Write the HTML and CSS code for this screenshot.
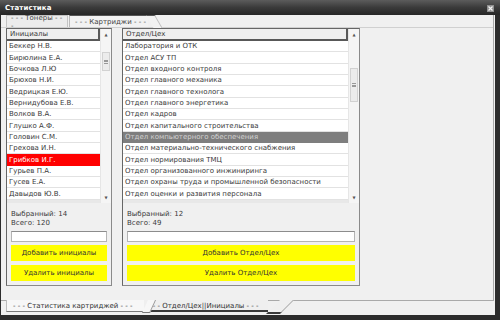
FILE: index.html
```html
<!DOCTYPE html>
<html lang="ru">
<head>
<meta charset="utf-8">
<title>Статистика</title>
<link rel="stylesheet" href="styles.css">
</head>
<body>
<div class="window">
  <div class="titlebar">
    <span class="title">Статистика</span>
    <svg class="close" width="7" height="7" viewBox="0 0 7 7"><rect width="7" height="7" fill="#8e8e8e"/><path d="M1.5 1.5L5.5 5.5M5.5 1.5L1.5 5.5" stroke="#f4f4f4" stroke-width="1.2"/></svg>
  </div>
  <div class="client">
    <div class="outer-page">
      <div class="inner-tabs">
        <div class="ttab">- - - Тонеры - - -</div>
        <div class="ttab active">- - - Картриджи - - -</div>
      </div>
      <div class="inner-page">
        <div class="panel panel-left">
          <div class="list">
            <div class="list-body">
              <div class="hdr">Инициалы</div>
              <div class="row">Беккер Н.В.</div>
              <div class="row">Бирюлина Е.А.</div>
              <div class="row">Бочкова Л.Ю</div>
              <div class="row">Брюхов Н.И.</div>
              <div class="row">Ведрицкая Е.Ю.</div>
              <div class="row">Вернидубова Е.В.</div>
              <div class="row">Волков В.А.</div>
              <div class="row">Глушко А.Ф.</div>
              <div class="row">Головин С.М.</div>
              <div class="row">Грехова И.Н.</div>
              <div class="row red">Грибков И.Г.</div>
              <div class="row">Гурьев П.А.</div>
              <div class="row">Гусев Е.А.</div>
              <div class="row">Давыдов Ю.В.</div>
            </div>
            <div class="vscroll">
              <span class="arrow">▲</span>
              <div class="thumb thumb-left"><span class="grip"></span></div>
              <span class="arrow down">▼</span>
            </div>
          </div>
          <div class="info">
            <div>Выбранный: 14</div>
            <div>Всего: 120</div>
          </div>
          <div class="input"></div>
          <div class="btn">Добавить инициалы</div>
          <div class="btn btn2">Удалить инициалы</div>
        </div>
        <div class="panel panel-right">
          <div class="list">
            <div class="list-body">
              <div class="hdr">Отдел/Цех</div>
              <div class="row">Лаборатория и ОТК</div>
              <div class="row">Отдел АСУ ТП</div>
              <div class="row">Отдел входного контроля</div>
              <div class="row">Отдел главного механика</div>
              <div class="row">Отдел главного технолога</div>
              <div class="row">Отдел главного энергетика</div>
              <div class="row">Отдел кадров</div>
              <div class="row">Отдел капитального строительства</div>
              <div class="row gray">Отдел компьютерного обеспечения</div>
              <div class="row">Отдел материально-технического снабжения</div>
              <div class="row">Отдел нормирования ТМЦ</div>
              <div class="row">Отдел организованного инжиниринга</div>
              <div class="row">Отдел охраны труда и промышленной безопасности</div>
              <div class="row">Отдел оценки и развития персонала</div>
            </div>
            <div class="vscroll">
              <span class="arrow">▲</span>
              <div class="thumb thumb-right"><span class="grip"></span></div>
              <span class="arrow down">▼</span>
            </div>
          </div>
          <div class="info">
            <div>Выбранный: 12</div>
            <div>Всего: 49</div>
          </div>
          <div class="input"></div>
          <div class="btn">Добавить Отдел/Цех</div>
          <div class="btn btn2">Удалить Отдел/Цех</div>
        </div>
      </div>
    </div>
    <div class="outer-tabs">
      <div class="btab active">- - - Статистика картриджей - - -</div>
      <div class="btab">- - - Отдел/Цех||Инициалы - - -</div>
    </div>
  </div>
</div>
</body>
</html>
```
FILE: styles.css
```css
* { box-sizing: border-box; }
html, body { margin: 0; padding: 0; }
body {
  width: 500px;
  height: 320px;
  overflow: hidden;
  background: #2a2a2a;
  font-family: "DejaVu Sans", Verdana, sans-serif;
  font-size: 7px;
  color: #3a3a3a;
}
.window {
  width: 500px;
  height: 320px;
  display: flex;
  flex-direction: column;
  background: #2c2c2c;
}
.titlebar {
  height: 15px;
  flex: none;
  display: flex;
  align-items: center;
  justify-content: space-between;
  padding: 0 6px 0 5px;
  background: linear-gradient(#5c5c5c, #3a3a3a 50%, #262626);
  color: #fff;
  font-weight: bold;
}
.title { letter-spacing: 0.1px; }
.close { display: block; margin-top: 1px; }
.client {
  margin-left: 1px;
  width: 494px;
  height: 300px;
  background: #f0f0f0;
  display: flex;
  flex-direction: column;
}
.outer-page {
  width: 493px;
  height: 286px;
  flex: none;
  border-right: 1px solid #a9a9a9;
  border-bottom: 1px solid #a9a9a9;
  display: flex;
  flex-direction: column;
}
.inner-tabs {
  height: 13px;
  flex: none;
  display: flex;
  align-items: flex-end;
  padding-left: 5px;
  border-bottom: 1px solid #d0d0d0;
}
.ttab {
  position: relative;
  height: 12px;
  display: flex;
  align-items: center;
  padding: 1px 4px 0;
  border: 1px solid #c4c4c4;
  border-bottom: none;
  background: #ececec;
  color: #444;
}
.ttab:first-child { width: 62px; justify-content: center; }
.ttab.active {
  margin-left: 1px;
  padding-left: 5px;
  padding-right: 2px;
  border-top: 1px solid #555;
  border-left: 1px solid #bbb;
  border-right: none;
  background: #f2f2f2;
  z-index: 1;
}
.ttab.active::after {
  content: "";
  position: absolute;
  top: -1px;
  right: -7px;
  width: 8px;
  height: 12px;
  border-top: 1px solid #555;
  border-right: 1px solid #bdbdbd;
  background: #f2f2f2;
  transform: skewX(30deg);
  transform-origin: top left;
}
.inner-page {
  flex: 1;
  display: flex;
  align-items: flex-start;
  padding-left: 5px;
  gap: 10px;
}
.panel {
  height: 258px;
  border: 1px solid #666;
  border-right-color: #8a8a8a;
  border-bottom-color: #8a8a8a;
  display: flex;
  flex-direction: column;
  background: #f0f0f0;
}
.panel-left { width: 106px; }
.panel-right { width: 238px; }
.list {
  height: 174px;
  flex: none;
  display: flex;
  background: #fff;
}
.list-body {
  flex: 1;
  min-width: 0;
  display: flex;
  flex-direction: column;
  background: #e8e8e8;
}
.hdr {
  height: 12px;
  flex: none;
  display: flex;
  align-items: center;
  padding-left: 3px;
  background: #efefef;
  border-right: 2px solid #585858;
  border-bottom: 2px solid #585858;
}
.row {
  height: 11.35px;
  flex: none;
  display: flex;
  align-items: center;
  padding-left: 2px;
  background: #fff;
  border-bottom: 1px solid #e2e2e2;
  white-space: nowrap;
}
.row.red { background: #ff0000; color: #fff; border-bottom-color: #ff0000; }
.row.gray { background: #7e7e7e; color: #d2d2d2; border-bottom-color: #7e7e7e; }
.vscroll {
  width: 11px;
  flex: none;
  display: flex;
  flex-direction: column;
  align-items: center;
  background: #f5f5f5;
  border-left: 1px solid #e6e6e6;
}
.arrow {
  font-size: 4px;
  line-height: 5px;
  color: #555;
  margin-top: 3px;
}
.arrow.down { margin-top: auto; margin-bottom: 3px; }
.thumb {
  width: 8px;
  background: #ececec;
  border: 1px solid #d2d2d2;
  display: flex;
  align-items: center;
  justify-content: center;
}
.thumb-left { height: 19px; margin-top: 15px; }
.thumb-right { height: 34px; margin-top: 31px; }
.grip {
  width: 4px;
  height: 4px;
  border-top: 1px solid #999;
  border-bottom: 1px solid #999;
  background: linear-gradient(#999, #999) center / 100% 1px no-repeat;
}
.info {
  margin-top: 7px;
  padding-left: 4px;
  line-height: 9px;
}
.input {
  margin: 3px 4px 0;
  height: 11px;
  background: #fff;
  border: 1px solid #b4b4b4;
  border-top-color: #8c8c8c;
}
.btn {
  margin: 3px 4px 0;
  height: 16px;
  background: #ffff00;
  display: flex;
  align-items: center;
  justify-content: center;
  color: #333;
}
.btn2 { margin-top: 4px; }
.outer-tabs {
  height: 13px;
  flex: none;
  display: flex;
  align-items: flex-start;
  padding-left: 5px;
}
.btab {
  position: relative;
  height: 12px;
  margin-top: -1px;
  padding-top: 1px;
  display: flex;
  align-items: center;
  color: #333;
}
.btab.active {
  width: 138px;
  padding-left: 6px;
  background: #f7f7f7;
  border-left: 1px solid #bdbdbd;
  border-bottom: 1px solid #7a7a7a;
  z-index: 2;
}
.btab.active::after {
  content: "";
  position: absolute;
  top: 0;
  right: -6px;
  width: 7px;
  height: 12px;
  background: #f7f7f7;
  border-right: 1px solid #9a9a9a;
  border-bottom: 1px solid #7a7a7a;
  transform: skewX(-25deg);
  transform-origin: bottom left;
}
.btab:not(.active) {
  width: 124px;
  padding-left: 4px;
  border-bottom: 2px solid #3a3a3a;
  background: #efefef;
  z-index: 1;
}
.btab:not(.active)::after {
  content: "";
  position: absolute;
  top: 0;
  right: -12px;
  width: 13px;
  height: 12px;
  background: #efefef;
  border-right: 1px solid #9a9a9a;
  border-bottom: 2px solid #3a3a3a;
  transform: skewX(-45deg);
  transform-origin: bottom left;
}
```
